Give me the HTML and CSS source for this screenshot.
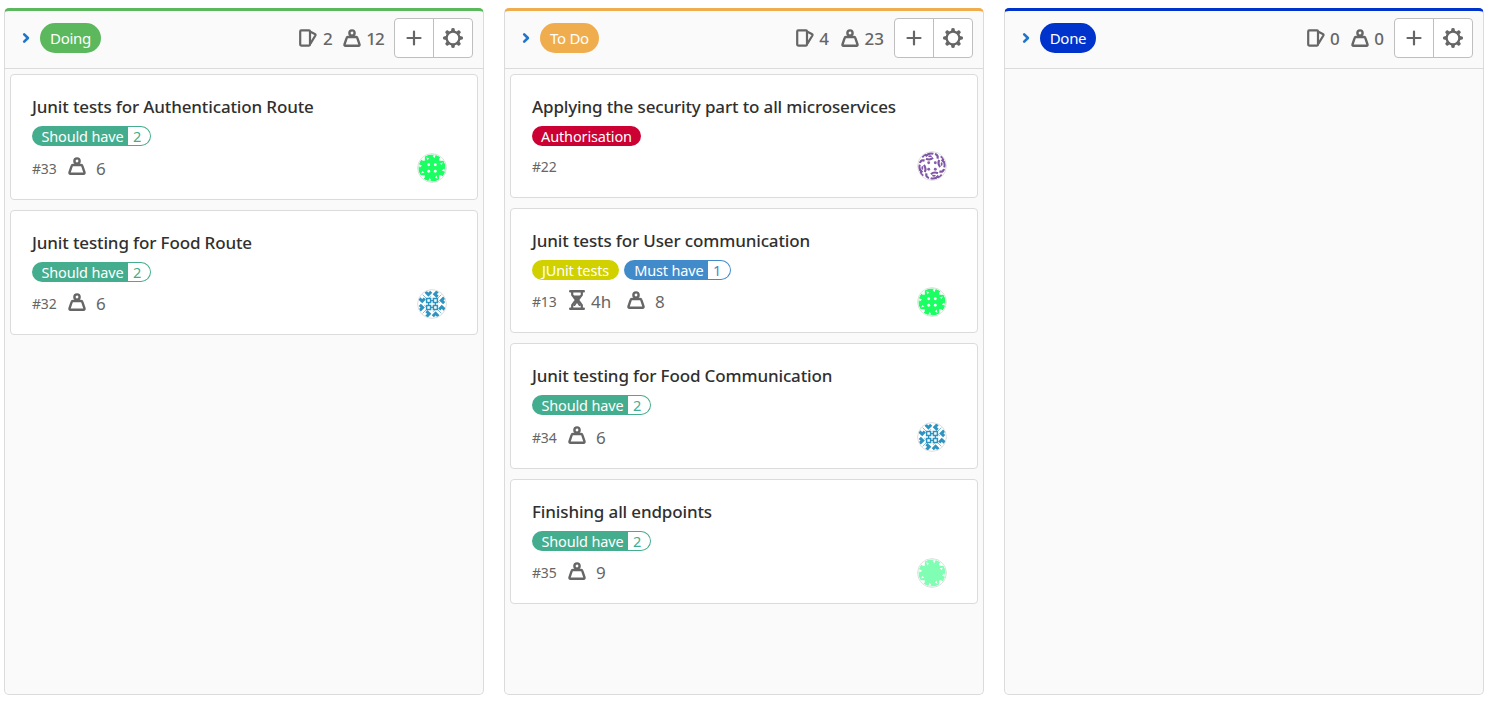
FILE: index.html
```
<!DOCTYPE html>
<html lang="en">
<head>
<meta charset="utf-8">
<title>Issue board</title>
<link rel="stylesheet" href="styles.css">
</head>
<body>
<svg class="defs" aria-hidden="true">
  <symbol id="chevron" viewBox="0 0 8 12"><path d="M2.2 2.3 5.9 6 2.2 9.7" fill="none" stroke="currentColor" stroke-width="2.6" stroke-linecap="round" stroke-linejoin="round"/></symbol>
  <symbol id="issues" viewBox="0 0 18 18"><g fill="none" stroke="currentColor" stroke-width="2.2" stroke-linejoin="round"><rect x="1.2" y="1.4" width="9.8" height="15.2" rx="1"/><path d="M11 2.6 15.8 5Q16.8 5.5 16.4 6.5L11.4 14.6"/></g></symbol>
  <symbol id="weight" viewBox="0 0 18 18"><g fill="none" stroke="currentColor" stroke-width="2.4" stroke-linejoin="round"><circle cx="9" cy="4" r="2.6"/><path d="M4.8 8h8.4q.9 0 1.1.8l2.2 6.6q.3 1.3-.9 1.3H2.4q-1.2 0-.9-1.3l2.2-6.6q.2-.8 1.1-.8z"/></g></symbol>
  <symbol id="hourglass" viewBox="0 0 16 20"><path d="M1.2 1.2h13.6M1.2 18.8h13.6" stroke="currentColor" stroke-width="2.4" stroke-linecap="round"/><path d="M3.2 2v3L7 10l-3.8 5v3M12.8 2v3L9 10l3.8 5v3" fill="none" stroke="currentColor" stroke-width="2.2"/><path d="M4 5.4h8L8.8 10.4 12 16H4l3.2-5.6z" fill="currentColor"/><path d="M8 13 10.8 17H5.2z" fill="#fff"/></symbol>
  <symbol id="plus" viewBox="0 0 16 16"><path d="M8 1.5v13M1.5 8h13" stroke="currentColor" stroke-width="2.2" stroke-linecap="round"/></symbol>
  <symbol id="gear" viewBox="-10 -10 20 20"><circle r="6.4" fill="none" stroke="currentColor" stroke-width="2.3"/><g fill="currentColor"><path id="tooth" d="M-2-6.8-1.6-9.2Q-1.4-10 0-10T1.6-9.2L2-6.8z"/><use href="#tooth" transform="rotate(45)"/><use href="#tooth" transform="rotate(90)"/><use href="#tooth" transform="rotate(135)"/><use href="#tooth" transform="rotate(180)"/><use href="#tooth" transform="rotate(225)"/><use href="#tooth" transform="rotate(270)"/><use href="#tooth" transform="rotate(315)"/></g></symbol>

  <clipPath id="round"><circle r="13.8"/></clipPath>
  <g id="edge-green" fill="#fff"><path d="M-7.2-13v5.8h-2.2l-1-1.4-1.4 1.4H-14zM-5.6-10.8l2.6 1-1.5 2.2zM.6-12.3l3.2-.9-1.4 3.4z"/></g>
  <g id="dot"><circle cx="-3.3" cy="-3.3" r="1.45"/></g>
  <g id="edge-blue" fill="none" stroke="#2d93c0"><path d="M-6.4-12.2-3.6-9.3-.8-12.2M5.6-12.8 2.8-9.8 5.6-7.2" stroke-width="3"/><path d="M-5.4-5.4h4v4h-4z" stroke-width="1.5"/><path d="M-5.5-5.5-9.4-9.4M-3.3-5.5-1-7.8" stroke-width="1" stroke-opacity=".6"/><path d="M-1.4-3.4H0M-3.4-1.4V0" stroke-width="1.3"/></g>
  <g id="edge-purple"><path d="M-6.4-9.6Q-3.2-14 1.4-12.2M-6-7.2Q-1.8-5.4 1-8.2M3-12Q6.6-11 5.4-7.4M-6.6-12.4-9.8-8.8" fill="none" stroke="#7f55a5" stroke-width="2.2"/><path d="M-4-9.7Q-2-11.6.2-9.7-2-7.7-4-9.7z" fill="#7f55a5"/></g>

  <symbol id="av-green" viewBox="-15 -15 30 30"><circle r="14.4" fill="#fff" stroke="#dedede"/><g clip-path="url(#round)"><circle r="13.5" fill="#1aff62"/><use href="#edge-green"/><use href="#edge-green" transform="rotate(90)"/><use href="#edge-green" transform="rotate(180)"/><use href="#edge-green" transform="rotate(270)"/><g fill="#fff"><use href="#dot"/><use href="#dot" transform="rotate(90)"/><use href="#dot" transform="rotate(180)"/><use href="#dot" transform="rotate(270)"/></g></g></symbol>
  <symbol id="av-mint" viewBox="-15 -15 30 30"><circle r="14.4" fill="#fff" stroke="#dedede"/><g clip-path="url(#round)"><circle r="13.5" fill="#80ffb4"/><use href="#edge-green"/><use href="#edge-green" transform="rotate(90)"/><use href="#edge-green" transform="rotate(180)"/><use href="#edge-green" transform="rotate(270)"/></g></symbol>
  <symbol id="av-blue" viewBox="-15 -15 30 30"><circle r="14.4" fill="#fff" stroke="#dedede"/><g clip-path="url(#round)"><use href="#edge-blue"/><use href="#edge-blue" transform="rotate(90)"/><use href="#edge-blue" transform="rotate(180)"/><use href="#edge-blue" transform="rotate(270)"/></g></symbol>
  <symbol id="av-purple" viewBox="-15 -15 30 30"><circle r="14.4" fill="#fff" stroke="#dedede"/><g clip-path="url(#round)"><use href="#edge-purple"/><use href="#edge-purple" transform="rotate(90)"/><use href="#edge-purple" transform="rotate(180)"/><use href="#edge-purple" transform="rotate(270)"/><g fill="#8860ac"><use href="#dot"/><use href="#dot" transform="rotate(90)"/><use href="#dot" transform="rotate(180)"/><use href="#dot" transform="rotate(270)"/></g></g></symbol>
</svg>

<main class="board">
  <section class="list doing">
    <header class="list-head">
      <svg class="chev"><use href="#chevron"/></svg><span class="pill">Doing</span>
      <div class="counts"><svg class="ico"><use href="#issues"/></svg><span class="total">2</span><svg class="ico"><use href="#weight"/></svg><span class="sum">12</span></div>
      <div class="buttons"><button><svg class="plus"><use href="#plus"/></svg></button><button><svg class="gear"><use href="#gear"/></svg></button></div>
    </header>
    <div class="cards">
      <article class="card">
        <h4>Junit tests for Authentication Route</h4>
        <div class="labels"><span class="label should">Should have<b>2</b></span></div>
        <div class="meta"><span class="num">#33</span><svg class="ico"><use href="#weight"/></svg><span class="val">6</span><svg class="avatar"><use href="#av-green"/></svg></div>
      </article>
      <article class="card">
        <h4>Junit testing for Food Route</h4>
        <div class="labels"><span class="label should">Should have<b>2</b></span></div>
        <div class="meta"><span class="num">#32</span><svg class="ico"><use href="#weight"/></svg><span class="val">6</span><svg class="avatar"><use href="#av-blue"/></svg></div>
      </article>
    </div>
  </section>

  <section class="list todo">
    <header class="list-head">
      <svg class="chev"><use href="#chevron"/></svg><span class="pill">To Do</span>
      <div class="counts"><svg class="ico"><use href="#issues"/></svg><span class="total">4</span><svg class="ico"><use href="#weight"/></svg><span class="sum">23</span></div>
      <div class="buttons"><button><svg class="plus"><use href="#plus"/></svg></button><button><svg class="gear"><use href="#gear"/></svg></button></div>
    </header>
    <div class="cards">
      <article class="card compact">
        <h4>Applying the security part to all microservices</h4>
        <div class="labels"><span class="label auth">Authorisation</span></div>
        <div class="meta"><span class="num">#22</span><svg class="avatar"><use href="#av-purple"/></svg></div>
      </article>
      <article class="card">
        <h4>Junit tests for User communication</h4>
        <div class="labels"><span class="label junit">JUnit tests</span><span class="label must">Must have<b>1</b></span></div>
        <div class="meta"><span class="num">#13</span><svg class="hour"><use href="#hourglass"/></svg><span class="time">4h</span><svg class="ico"><use href="#weight"/></svg><span class="val">8</span><svg class="avatar"><use href="#av-green"/></svg></div>
      </article>
      <article class="card">
        <h4>Junit testing for Food Communication</h4>
        <div class="labels"><span class="label should">Should have<b>2</b></span></div>
        <div class="meta"><span class="num">#34</span><svg class="ico"><use href="#weight"/></svg><span class="val">6</span><svg class="avatar"><use href="#av-blue"/></svg></div>
      </article>
      <article class="card">
        <h4>Finishing all endpoints</h4>
        <div class="labels"><span class="label should">Should have<b>2</b></span></div>
        <div class="meta"><span class="num">#35</span><svg class="ico"><use href="#weight"/></svg><span class="val">9</span><svg class="avatar"><use href="#av-mint"/></svg></div>
      </article>
    </div>
  </section>

  <section class="list done">
    <header class="list-head">
      <svg class="chev"><use href="#chevron"/></svg><span class="pill">Done</span>
      <div class="counts"><svg class="ico"><use href="#issues"/></svg><span class="total">0</span><svg class="ico"><use href="#weight"/></svg><span class="sum">0</span></div>
      <div class="buttons"><button><svg class="plus"><use href="#plus"/></svg></button><button><svg class="gear"><use href="#gear"/></svg></button></div>
    </header>
  </section>
</main>
</body>
</html>
```

FILE: styles.css
```
* { box-sizing: border-box; }
body { margin: 0; background: #fff; font-family: "Segoe UI", "Noto Sans", sans-serif; color: #666; overflow: hidden; }
svg { display: block; flex: none; }
.defs { width: 0; height: 0; position: absolute; }
.board { display: flex; gap: 20px; padding: 8px 4px 6px; height: 701px; }
.list { --accent: #5cb85c; width: 480px; height: 687px; flex: none; background: #fafafa; border: 1px solid #dbdbdb; border-top: 3px solid var(--accent); border-radius: 5px; }
.todo { --accent: #f0ad4e; }
.done { --accent: #0033cc; }
.list-head { height: 58px; display: flex; align-items: center; padding: 0 10px 3px 17px; border-bottom: 1px solid #dbdbdb; }
.chev { width: 8px; height: 12px; color: #1f75cb; margin-right: 10px; }
.pill { width: 61px; height: 30px; border-radius: 15px; background: var(--accent); color: #fff; font-size: 15px; line-height: 30px; text-align: center; letter-spacing: -.3px; }
.todo .pill { width: 59px; }
.done .pill { width: 56px; }
.counts { margin-left: auto; display: flex; align-items: center; font-size: 17px; font-weight: 500; line-height: 24px; }
.counts span { margin: 2px 10px 0 5.5px; }
.doing .sum { letter-spacing: -.8px; }
.todo .total { margin-right: 12px; }
.done .total { margin-right: 11px; }
.ico { width: 18px; height: 18px; }
.buttons { display: flex; width: 79px; height: 40px; background: #fff; border: 1px solid #bfbfbf; border-radius: 4px; }
button { flex: 1; padding: 0; border: 0; background: none; color: #666; display: flex; align-items: center; justify-content: center; }
button + button { border-left: 1px solid #bfbfbf; }
.plus { width: 16px; height: 16px; }
.gear { width: 20px; height: 20px; }
.cards { display: flex; flex-direction: column; gap: 10px; padding: 5px; }
.card { height: 125.5px; background: #fff; border: 1px solid #dbdbdb; border-radius: 4px; padding: 20px 30px 0 21px; }
.compact { height: 123.7px; }
h4 { margin: 0; font-size: 17px; font-weight: 500; line-height: 24px; letter-spacing: -.14px; color: #303030; white-space: nowrap; }
.labels { display: flex; gap: 5px; margin-top: 7px; }
.label { height: 20px; border-radius: 10px; display: flex; justify-content: center; color: #fff; font-size: 14.5px; line-height: 20px; letter-spacing: -.15px; white-space: nowrap; }
.label b { font-weight: 400; width: 22px; height: 18px; margin: 1px 1px 0 4.5px; line-height: 18px; padding-left: 5px; background: #fff; border-radius: 0 9px 9px 0; }
.should { width: 119px; background: #44ad8e; justify-content: flex-end; }
.should b { color: #44ad8e; }
.auth { width: 109px; background: #cc0033; }
.junit { width: 87px; background: #d1d100; }
.must { width: 107px; background: #428bca; justify-content: flex-end; }
.must b { color: #428bca; }
.meta { display: flex; align-items: center; height: 30px; margin-top: 7px; }
.compact .meta { margin-top: 5px; }
.num { width: 36px; font-size: 14px; letter-spacing: -.2px; }
.meta .ico { margin-top: -4px; }
.val { margin-left: 10px; margin-top: 1px; font-size: 17px; line-height: 24px; }
.hour { width: 16px; height: 20px; margin: -4px 0 0 1px; }
.time { width: 42px; padding-left: 6px; margin-top: 1px; font-size: 17px; line-height: 24px; }
.avatar { width: 30px; height: 30px; margin-left: auto; }
```
